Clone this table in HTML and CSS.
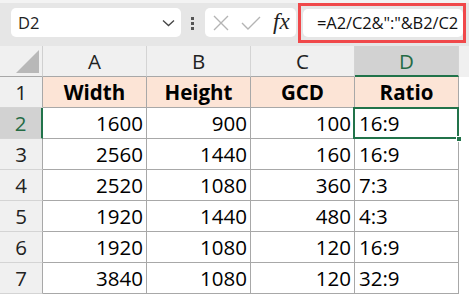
FILE: index.html
```html
<!DOCTYPE html>
<html>
<head>
<meta charset="utf-8">
<link rel="stylesheet" href="styles.css">
</head>
<body>
<div class="toolbar">
  <div class="namebox">
    <span class="name">D2</span>
    <svg class="chev" width="13" height="8" viewBox="0 0 13 8"><path d="M1 1.5 L6.5 6.5 L12 1.5" fill="none" stroke="#444" stroke-width="1.3"/></svg>
  </div>
  <div class="dots"><i></i><i></i><i></i></div>
  <div class="iconbox">
    <svg width="16" height="16" viewBox="0 0 16 16"><path d="M1 1 L15 15 M15 1 L1 15" stroke="#b4b4b4" stroke-width="1.4" fill="none"/></svg>
    <svg width="20" height="14" viewBox="0 0 20 14"><path d="M1 7 L7 13 L19 1" stroke="#b4b4b4" stroke-width="1.4" fill="none"/></svg>
    <span class="fx">fx</span>
  </div>
  <div class="formula-frame">
    <div class="formula">=A2/C2&amp;":"&amp;B2/C2</div>
  </div>
</div>
<div class="sheet">
  <div class="corner"><span class="tri"></span></div>
  <div class="colh">A</div>
  <div class="colh">B</div>
  <div class="colh">C</div>
  <div class="colh sel">D</div>
  <div class="colh rest"></div>

  <div class="rowh">1</div>
  <div class="cell head">Width</div>
  <div class="cell head">Height</div>
  <div class="cell head">GCD</div>
  <div class="cell head">Ratio</div>
  <div class="rest"></div>

  <div class="rowh sel">2</div>
  <div class="cell num">1600</div>
  <div class="cell num">900</div>
  <div class="cell num">100</div>
  <div class="cell txt active">16:9<span class="handle"></span></div>
  <div class="rest"></div>

  <div class="rowh">3</div>
  <div class="cell num">2560</div>
  <div class="cell num">1440</div>
  <div class="cell num">160</div>
  <div class="cell txt">16:9</div>
  <div class="rest"></div>

  <div class="rowh">4</div>
  <div class="cell num">2520</div>
  <div class="cell num">1080</div>
  <div class="cell num">360</div>
  <div class="cell txt">7:3</div>
  <div class="rest"></div>

  <div class="rowh">5</div>
  <div class="cell num">1920</div>
  <div class="cell num">1440</div>
  <div class="cell num">480</div>
  <div class="cell txt">4:3</div>
  <div class="rest"></div>

  <div class="rowh">6</div>
  <div class="cell num">1920</div>
  <div class="cell num">1080</div>
  <div class="cell num">120</div>
  <div class="cell txt">16:9</div>
  <div class="rest"></div>

  <div class="rowh">7</div>
  <div class="cell num">3840</div>
  <div class="cell num">1080</div>
  <div class="cell num">120</div>
  <div class="cell txt">32:9</div>
  <div class="rest"></div>
</div>
</body>
</html>
```
FILE: styles.css
```css
* { box-sizing: border-box; }
html, body { margin: 0; padding: 0; background: #fff; }
body { width: 469px; height: 295px; overflow: hidden; font-family: "Open Sans", "Noto Sans", sans-serif; }

.toolbar {
  height: 46px;
  background: #e6e6e6;
  border-top: 3px solid #f3f3f3;
  display: flex;
  align-items: flex-start;
  padding-left: 11px;
}
.namebox {
  margin-top: 5px;
  width: 170px;
  height: 29px;
  background: #fff;
  border-radius: 5px;
  display: flex;
  align-items: center;
  justify-content: space-between;
  padding: 0 6px 0 7px;
}
.name { font-size: 16.5px; color: #222; font-family: "Open Sans", sans-serif; }
.chev { margin-top: 1px; }
.dots {
  margin: 14px 0 0 10px;
  width: 3px;
  display: flex;
  flex-direction: column;
  gap: 2px;
}
.dots i { display: block; width: 3px; height: 3px; background: #555; }
.iconbox {
  margin: 5px 0 0 11px;
  width: 91px;
  height: 29px;
  background: #fff;
  border-radius: 5px;
  display: flex;
  align-items: center;
  padding-left: 8px;
  gap: 12px;
}
.fx {
  font-family: "Liberation Serif", "DejaVu Serif", serif;
  font-style: italic;
  font-size: 23px;
  color: #222;
  margin-left: 0px;
  line-height: 1;
  margin-top: -3px;
}
.formula-frame {
  margin-left: 2px;
  width: 168px;
  height: 40px;
  border: 3px solid #f0484a;
  padding: 3px 0 0 2px;
  background: #e6e6e6;
}
.formula {
  width: 160px;
  height: 28px;
  background: #fff;
  border-radius: 5px;
  font-size: 16.5px;
  line-height: 28px;
  padding-left: 14px;
  color: #111;
  white-space: nowrap;
  letter-spacing: -0.1px;
  overflow: hidden;
}

.sheet {
  display: grid;
  grid-template-columns: 43px 104px 104px 104px 104px 1fr;
  grid-auto-rows: 31px;
}
.sheet > div {
  border-right: 1px solid #a8a8a8;
  border-bottom: 1px solid #a8a8a8;
  font-size: 20.5px;
  line-height: 30px;
  color: #000;
  position: relative;
}
.corner {
  background: #f0f0f0;
  border-right-color: #d0d0d0 !important;
  border-bottom-color: #a8a8a8 !important;
}
.tri {
  position: absolute;
  right: 3px;
  bottom: 3px;
  width: 0; height: 0;
  border-left: 23px solid transparent;
  border-bottom: 23px solid #b8b8b8;
}
.colh {
  background: #f0f0f0;
  text-align: center;
  border-right-color: #d4d4d4 !important;
  border-bottom-color: #a8a8a8 !important;
  color: #222 !important;
}
.colh.sel {
  background: #d2d2d2;
  color: #256b45 !important;
  border-bottom: 2px solid #21734a !important;
}
.colh.rest { border-right: none !important; background: #f0f0f0; }
.rest { border: none !important; background: #fff; }
.rowh {
  background: #f0f0f0;
  text-align: center;
  border-bottom-color: #d4d4d4 !important;
  border-right-color: #a8a8a8 !important;
  color: #222 !important;
}
.rowh.sel {
  background: #d2d2d2;
  color: #256b45 !important;
  border-right: 2px solid #21734a !important;
}
.head {
  background: #fce4d6;
  font-weight: 700;
  text-align: center;
}
.num { text-align: right; padding-right: 3px; }
.txt { padding-left: 4px; }
.active::after {
  content: "";
  position: absolute;
  left: -2px; top: -1px; right: -1px; bottom: -1px;
  border: 2px solid #21734a;
}
.handle {
  position: absolute;
  right: -4px;
  bottom: -4px;
  width: 6px; height: 6px;
  background: #21734a;
  border: 1px solid #fff;
  z-index: 2;
}
```
